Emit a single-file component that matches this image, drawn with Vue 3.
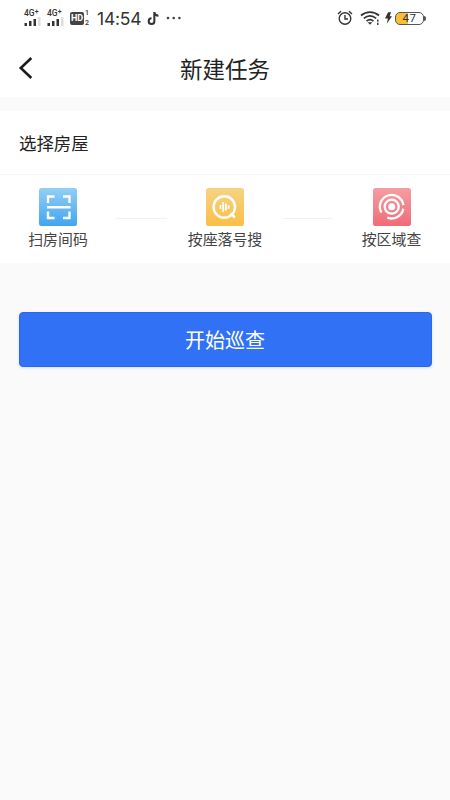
<script setup>
const bars = [3, 5, 7, 9]
</script>

<template>
  <div class="screen">
    <div class="status">
      <div v-for="n in 2" :key="n" class="signal">
        <span class="net">4G<sup>+</sup></span>
        <svg width="17" height="9" viewBox="0 0 17 9">
          <rect v-for="(h, i) in bars" :key="i" :x="i * 4.5 + 0.5" :y="9 - h" width="2.5" :height="h" :fill="i === 3 ? '#dedede' : '#333'" />
        </svg>
      </div>
      <div class="hd">HD</div>
      <div class="sims"><span>1</span><span>2</span></div>
      <div class="time">14:54</div>
      <svg class="note" width="13" height="15" viewBox="0 0 13 16" fill="none" stroke="#333" stroke-width="2.2">
        <path d="M7.4 1v9.8a3 3 0 1 1-3-3M7.4 1.4c.4 2.3 2 3.5 4.4 3.6" />
      </svg>
      <svg class="dots" width="16" height="4" viewBox="0 0 16 4" fill="#444">
        <circle cx="2" cy="2" r="1.3" /><circle cx="7.7" cy="2" r="1.3" /><circle cx="13.4" cy="2" r="1.3" />
      </svg>
      <div class="space"></div>
      <svg width="16" height="16" viewBox="0 0 16 16" fill="none" stroke="#333" stroke-width="1.4">
        <circle cx="8" cy="8.5" r="5.8" /><path d="M8 5v4h3M1 4l3-2.7M15 4l-3-2.7" />
      </svg>
      <svg class="wifi" width="21" height="16" viewBox="0 0 21 16" fill="none" stroke="#333" stroke-width="1.7">
        <path d="M1 5.500c5.400-4.600 12.600-4.600 18 0M3.800 8.400c3.800-3.200 8.600-3.200 12.400 0M6.500 11.100c2.200-1.800 4.800-1.800 7 0" />
        <path d="M7.700 12.200h4.600L10 14.700z" fill="#333" stroke="none" />
        <path d="M17.800 9.500v2.200M17.800 12.800v2.200" stroke-width="1.400" />
      </svg>
      <svg class="bolt" width="7" height="12" viewBox="0 0 8 13" fill="#333"><path d="M3.500 0h3.500L5.300 4.500H8L2 13l1.300-6H0z" /></svg>
      <div class="battery"><span>47</span></div>
      <div class="cap"></div>
    </div>

    <header class="header">
      <svg class="back" width="16" height="24" viewBox="0 0 16 24" fill="none" stroke="#1c1c1c" stroke-width="2.600">
        <path d="M13.300 2L2.800 12l10.500 10" />
      </svg>
      <h1>新建任务</h1>
    </header>

    <section class="card">
      <h2>选择房屋</h2>
      <div class="options">
        <div class="option">
          <svg width="38" height="38" viewBox="0 0 38 38">
            <defs><linearGradient id="blue" x1="0" y1="0" x2="0" y2="1"><stop stop-color="#93cff5" /><stop offset="1" stop-color="#42a4f0" /></linearGradient></defs>
            <rect width="38" height="38" rx="2.500" fill="url(#blue)" />
            <path d="M9 15V8.500h6.500M24 8.500h6.500V15M30.500 23.500V30H24M15.500 30H9v-6.500M8 19.300h23.500" fill="none" stroke="#fff" stroke-width="2.400" />
          </svg>
          <span>扫房间码</span>
        </div>
        <i class="line"></i>
        <div class="option">
          <svg width="38" height="38" viewBox="0 0 38 38">
            <defs><linearGradient id="gold" x1="0" y1="0" x2="0" y2="1"><stop stop-color="#f5d384" /><stop offset="1" stop-color="#fabf45" /></linearGradient></defs>
            <rect width="38" height="38" rx="2.500" fill="url(#gold)" />
            <circle cx="18.300" cy="19" r="10.700" fill="none" stroke="#fff" stroke-width="2.400" />
            <path d="M24.500 25.500l4.500 4" stroke="#fff" stroke-width="2.500" />
            <path d="M14.500 17v4M17.200 14v10M19.900 15.500v7M22.600 17.300v3.400" stroke="#fff" stroke-width="1.800" />
          </svg>
          <span>按座落号搜</span>
        </div>
        <i class="line"></i>
        <div class="option">
          <svg width="38" height="38" viewBox="0 0 38 38">
            <defs><linearGradient id="rose" x1="0" y1="0" x2="0" y2="1"><stop stop-color="#f59ea2" /><stop offset="1" stop-color="#f06b76" /></linearGradient></defs>
            <rect width="38" height="38" rx="2.500" fill="url(#rose)" />
            <circle cx="18.700" cy="18.700" r="3.500" fill="#fff" />
            <g fill="none" stroke="#fff" stroke-width="2.300">
              <circle cx="18.700" cy="18.700" r="7" />
              <path d="M8.500 24.600A11.800 11.800 0 1 1 30.400 17.200M30.300 20.700A11.800 11.800 0 0 1 14.300 29.600" />
            </g>
          </svg>
          <span>按区域查</span>
        </div>
      </div>
    </section>

    <button class="start">开始巡查</button>
  </div>
</template>

<style>
body { margin: 0; background: #fafafa; }
</style>

<style scoped>
.screen { width: 450px; height: 800px; overflow: hidden; background: #fafafa; font-family: "Noto Sans CJK SC", sans-serif; color: #222; }
.status { box-sizing: border-box; height: 36px; padding: 0 24px; display: flex; align-items: center; background: #fff; font-family: Roboto, sans-serif; color: #333; }
.signal { width: 17px; height: 16px; margin: 0 6px 1px 0; display: flex; flex-direction: column; justify-content: space-between; }
.net { font-size: 8.5px; line-height: 7px; font-weight: 500; white-space: nowrap; }
.net sup { font-size: 7px; line-height: 0; vertical-align: 2px; }
.hd { width: 14px; height: 13px; border-radius: 2px; background: #444; color: #fff; font: 700 9px/13px Roboto, sans-serif; text-align: center; }
.sims { margin-left: 1px; width: 6px; display: flex; flex-direction: column; gap: 1px; font-size: 7px; line-height: 9px; font-weight: 500; }
.time { margin: 2px 0 0 6px; width: 45px; font: 17.5px/20px Inter, sans-serif; letter-spacing: -0.2px; white-space: nowrap; }
.note { margin-left: 5px; }
.dots { margin-left: 6px; }
.space { flex: 1; }
.wifi { margin-left: 7px; }
.bolt { margin-left: 4px; }
.battery { box-sizing: border-box; margin-left: 3px; width: 29px; height: 13px; border: 1px solid #555; border-radius: 5px; background: linear-gradient(90deg, #f9be35 46%, #fff 46%); font: 11.5px/11px Roboto, sans-serif; letter-spacing: 0.5px; text-align: center; }
.cap { width: 2px; height: 5px; background: #555; border-radius: 0 2px 2px 0; }
.header { height: 61px; padding: 0 18px; display: grid; grid-template-columns: 16px 1fr 16px; align-items: center; background: #fff; }
.back { margin-top: 3px; }
h1 { margin: 3px 0 0; text-align: center; font-size: 22.5px; line-height: 32px; font-weight: 400; }
.card { margin-top: 14px; height: 152px; background: #fff; }
h2 { box-sizing: border-box; margin: 0; height: 64px; padding-left: 19px; border-bottom: 1px solid #f5f5f5; font-size: 17.4px; line-height: 63px; font-weight: 400; }
.options { display: grid; grid-template-columns: 116px 51px 116px 49px 119px; padding-top: 13px; align-items: start; }
.option { display: flex; flex-direction: column; align-items: center; font-size: 14.9px; line-height: 22px; color: #444; white-space: nowrap; }
.option span { margin-top: 2px; }
.line { height: 1px; margin-top: 30px; background: #f1f1f1; }
.start { display: block; width: 413px; height: 55px; margin: 49.4px 0 0 18.5px; padding: 1px 0 0; border: 1px solid #2d67e8; border-radius: 4px; background: #3071f5; color: #fff; font: 20px/52px "Noto Sans CJK SC", sans-serif; box-shadow: 0 1px 3px #3071f533; }
</style>
